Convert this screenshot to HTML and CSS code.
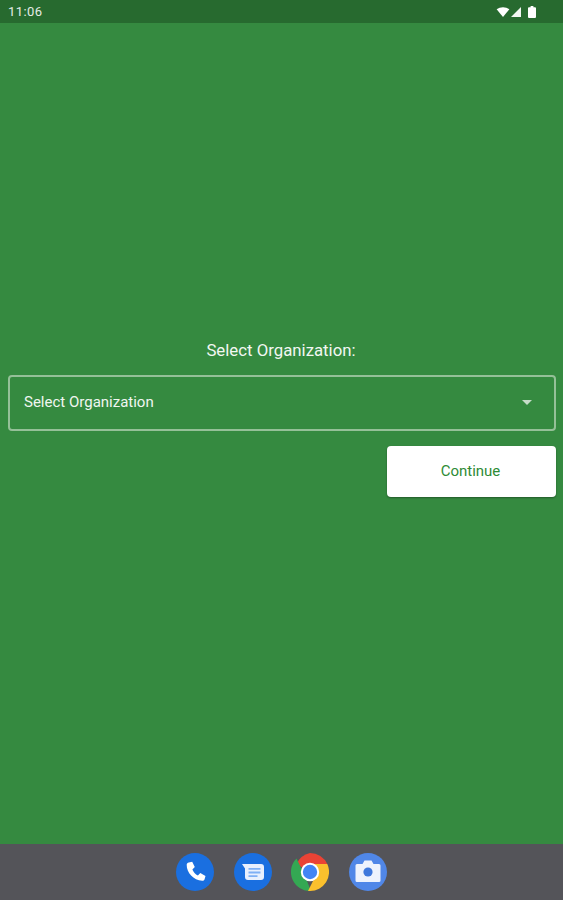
FILE: index.html
```html
<!DOCTYPE html>
<html lang="en">
<head>
<meta charset="utf-8">
<title>Select Organization</title>
<link rel="stylesheet" href="styles.css">
</head>
<body>
<div class="screen">
  <header class="status">
    <span class="time">11:06</span>
    <div class="status-icons">
      <svg width="14" height="10" viewBox="0 0 15 11"><path d="M0.5 2.600C4.500-.5 10.500-.5 14.500 2.600L7.500 11z" fill="#fff"/></svg>
      <svg width="10" height="10" viewBox="0 0 11 11"><path d="M11 0V11H0z" fill="#f2f6f2"/></svg>
      <svg class="battery" width="8" height="12" viewBox="0 0 8 12"><path d="M2.600 0h2.800v1.200H7a1 1 0 0 1 1 1V11a1 1 0 0 1-1 1H1a1 1 0 0 1-1-1V2.200a1 1 0 0 1 1-1h1.600z" fill="#fff"/></svg>
    </div>
  </header>
  <main class="content">
    <div class="title">Select Organization:</div>
    <div class="select">
      <span>Select Organization</span>
      <svg class="caret" width="10" height="5" viewBox="0 0 10 5"><path d="M0 0h10L5 5z" fill="#c6dcc8"/></svg>
    </div>
    <div class="actions"><button class="continue" type="button">Continue</button></div>
  </main>
  <nav class="dock">
    <svg class="app" viewBox="0 0 38 38"><circle cx="19" cy="19" r="19" fill="#1a6fe0"/><path d="M12.800 9.500l3.400-.8 2.600 5.400-2.400 2.300c1 2.600 2.900 4.800 5.500 6l2.400-2.300 5.200 2.800-1 3.500c-.4 1-1.300 1.500-2.300 1.400C17.500 27 10.500 19.800 10.700 11.700c0-1 .9-1.900 2.100-2.200z" fill="#fff"/></svg>
    <svg class="app" viewBox="0 0 38 38"><circle cx="19" cy="19" r="19" fill="#1a6fe0"/><path d="M8 11h19a3 3 0 0 1 3 3v10a3 3 0 0 1-3 3H14a3 3 0 0 1-3-3v-8.500z" fill="#e8f0fe"/><path d="M14.500 15h12v1.800h-12zM14.500 18.600h12v1.800h-12zM14.500 22.200h9v1.800h-9z" fill="#7fb0f5"/></svg>
    <svg class="app" viewBox="0 0 38 38"><path d="M19 19L5.500 11.200A19 19 0 0 1 19 0a19 19 0 0 1 17.300 11z" fill="#ea4335"/><path d="M5.500 5.600L14 23l6 15A19 19 0 0 1 5.500 5.600z" fill="#34a853"/><path d="M36.300 11A19 19 0 0 1 19 38l-2-.1L25 22l-6-11z" fill="#fbc02d"/><circle cx="19" cy="19" r="9.200" fill="#fff"/><circle cx="19" cy="19" r="7.200" fill="#4285f4"/></svg>
    <svg class="app" viewBox="0 0 38 38"><circle cx="19" cy="19" r="19" fill="#5087e8"/><path d="M8 11h5.500l2-3.500h7l2 3.500H30a1.500 1.500 0 0 1 1.500 1.500V27.500A1.500 1.500 0 0 1 30 29H8a1.500 1.500 0 0 1-1.500-1.500V12.500A1.500 1.500 0 0 1 8 11z" fill="#eef3fd"/><circle cx="19" cy="19" r="4.600" fill="#3f78dc"/></svg>
  </nav>
</div>
</body>
</html>
```
FILE: styles.css
```css
* { box-sizing: border-box; }
html, body { margin: 0; height: 100%; }
body { font-family: Roboto, "Liberation Sans", sans-serif; }
.screen { width: 563px; height: 900px; display: flex; flex-direction: column; background: #358a40; overflow: hidden; }
.status { height: 23px; flex: none; background: #276a2f; color: #e4ece5; display: flex; align-items: center; justify-content: space-between; padding: 0 27px 0 8px; }
.time { font-size: 13px; letter-spacing: .4px; }
.status-icons { display: flex; align-items: center; gap: 1px; }
.battery { margin-left: 6px; }
.content { flex: 1; padding: 316px 7px 0 8px; color: #fff; }
.title { text-align: center; font-size: 16.800px; line-height: 22px; color: #f2f7f2; margin-bottom: 14px; padding-right: 2px; }
.select { height: 56px; border: 2px solid #95c098; border-radius: 4px; display: flex; align-items: center; justify-content: space-between; padding: 0 22px 2px 14px; font-size: 15px; color: #f0f6f0; }
.actions { display: flex; justify-content: flex-end; margin-top: 15px; }
.continue { width: 169px; height: 51px; background: #fff; border: 0; border-radius: 4px; padding: 0 2px 2px 0; color: #2e8b36; font: 15px Roboto, "Liberation Sans", sans-serif; box-shadow: 0 1px 2px rgba(0,0,0,.35); }
.dock { height: 56px; flex: none; background: #545459; display: flex; justify-content: center; align-items: center; gap: 20px; padding: 0 0 1px 0; }
.app { width: 38px; height: 38px; }
.dock .app:nth-child(3) { margin-left: -1px; }
```
